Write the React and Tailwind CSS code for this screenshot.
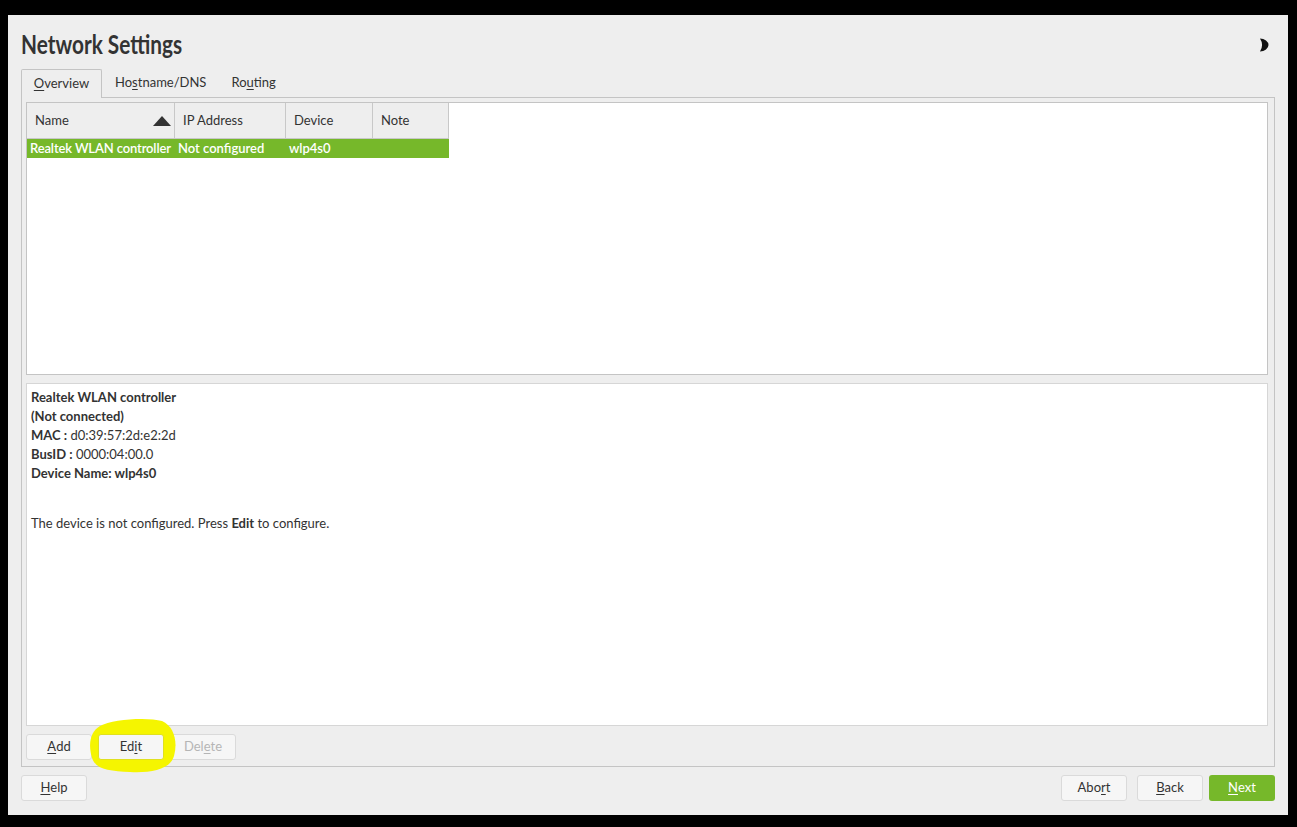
import React from "react";

const font = { fontFamily: "Lato, 'Noto Sans', sans-serif" };

function U({ children }) {
  return <span className="underline underline-offset-2">{children}</span>;
}

function Btn({ children, className = "" }) {
  return (
    <button
      className={`flex h-[26px] w-[66px] items-center justify-center rounded-[3px] border border-[#dadada] bg-[#f6f6f6] text-[13px] text-[#333] ${className}`}
    >
      {children}
    </button>
  );
}

export default function App() {
  return (
    <div className="h-[827px] w-full bg-black pl-[8px] pt-[15px]" style={font}>
      <div className="flex h-[800px] w-[1280px] flex-col bg-[#eeeeee] px-[13px] text-[#333]">
        <div className="flex h-[53px] items-center justify-between">
          <h1 className="inline-block origin-left scale-x-[0.8] pt-[6px] text-[26px] font-bold whitespace-nowrap text-[#333]">
            Network Settings
          </h1>
          <svg width="12" height="14" viewBox="0 0 12 14" className="mr-[4px] mt-[6px]">
            <path d="M1 0.5 A 8.5 6.5 0 0 1 1 13.5 A 12 12 0 0 0 1 0.5 Z" fill="#111" />
          </svg>
        </div>

        <div className="flex h-[29px] items-end text-[13px]">
          <div className="relative top-[1px] flex h-[29px] w-[81px] items-center justify-center rounded-t-[2px] border border-b-0 border-[#c4c4c4] bg-[#eeeeee]">
            <span><U>O</U>verview</span>
          </div>
          <div className="flex h-[29px] items-center pl-[13px]">
            Ho<U>s</U>tname/DNS
          </div>
          <div className="flex h-[29px] items-center pl-[25px]">
            Ro<U>u</U>ting
          </div>
        </div>

        <div className="flex h-[670px] flex-col border border-[#c4c4c4] pb-[6px] pl-[4px] pr-[6px] pt-[4px]">
          <div className="h-[273px] border border-[#c4c4c4] bg-white">
            <div className="flex h-[36px] w-[422px] border-b border-[#c8c8c8] bg-[#eeeeee] text-[13px]">
              <div className="flex w-[148px] items-center justify-between border-r border-[#c8c8c8] pl-[8px] pr-[3px]">
                <span>Name</span>
                <svg width="18" height="10" viewBox="0 0 18 10">
                  <path d="M0 10 L9 0 L18 10 Z" fill="#333" />
                </svg>
              </div>
              <div className="flex w-[111px] items-center border-r border-[#c8c8c8] pl-[8px]">IP Address</div>
              <div className="flex w-[87px] items-center border-r border-[#c8c8c8] pl-[8px]">Device</div>
              <div className="flex w-[76px] items-center border-r border-[#c8c8c8] pl-[8px]">Note</div>
            </div>
            <div className="flex h-[19px] w-[422px] items-center bg-[#76b82a] text-[13px] font-semibold text-white">
              <div className="w-[148px] whitespace-nowrap pl-[3px] tracking-[-0.01em]">Realtek WLAN controller</div>
              <div className="w-[111px] pl-[3px]">Not configured</div>
              <div className="w-[87px] pl-[3px]">wlp4s0</div>
              <div className="w-[76px]" />
            </div>
          </div>

          <div className="mt-[8px] h-[343px] border border-[#d6d6d6] bg-white px-[4px] pt-[4px] text-[13px] leading-[19px]">
            <div className="font-bold">Realtek WLAN controller</div>
            <div className="font-bold">(Not connected)</div>
            <div><b>MAC :</b> d0:39:57:2d:e2:2d</div>
            <div><b>BusID :</b> 0000:04:00.0</div>
            <div className="font-bold">Device Name: wlp4s0</div>
            <div className="h-[31px]" />
            <div>The device is not configured. Press <b>Edit</b> to configure.</div>
          </div>

          <div className="relative mt-[8px] flex gap-[6px]">
            <Btn><U>A</U>dd</Btn>
            <div className="relative">
              <svg
                className="absolute left-[-8px] top-[-16px]"
                width="88"
                height="56"
                viewBox="0 0 88 56"
              >
                <path
                  d="M10 8 C22 1 58 -1 72 3 C84 8 88 24 84 38 C80 52 60 55 40 54 C20 53 6 52 2 40 C-2 26 0 14 10 8 Z"
                  fill="#f5f500"
                />
              </svg>
              <Btn className="relative border-[#e0e020] bg-[#f2f200] text-[#222]">Ed<U>i</U>t</Btn>
            </div>
            <Btn className="text-[#b5b5b5]">Del<U>e</U>te</Btn>
          </div>
        </div>

        <div className="mt-[8px] flex items-center justify-between">
          <Btn><U>H</U>elp</Btn>
          <div className="flex gap-[10px]">
            <Btn>Abo<U>r</U>t</Btn>
            <Btn><U>B</U>ack</Btn>
            <button className="-ml-[4px] flex h-[26px] w-[66px] items-center justify-center rounded-[3px] bg-[#76b82a] text-[13px] text-white">
              <U>N</U>ext
            </button>
          </div>
        </div>
      </div>
    </div>
  );
}
